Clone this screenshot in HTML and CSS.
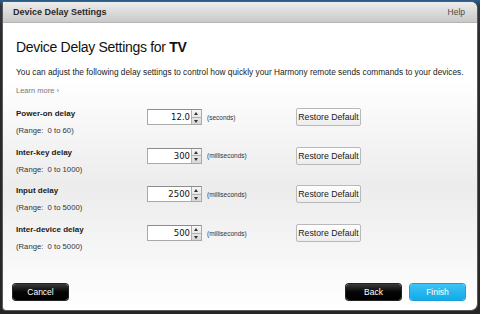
FILE: index.html
```html
<!DOCTYPE html>
<html lang="en">
  <head>
    <meta charset="UTF-8" />
    <title>Device Delay Settings</title>
    <link rel="stylesheet" href="styles.css">
  </head>
  <body>
    <div class="dialog">
      <div class="titlebar">
        <span class="titlebar__title">Device Delay Settings</span>
        <span class="titlebar__help">Help</span>
      </div>
      <div class="content">
        <h1>Device Delay Settings for <b>TV</b></h1>
        <p class="intro">You can adjust the following delay settings to control how quickly your Harmony remote sends commands to your devices.</p>
        <a class="learn">Learn more &rsaquo;</a>

        <div class="delays">
          <div class="delay">
            <div class="delay__label">
              <div class="delay__name">Power-on delay</div>
              <div class="delay__range">(Range:&nbsp; 0 to 60)</div>
            </div>
            <div class="delay__field">
              <div class="spin">
                <span class="spin__value">12.0</span>
                <span class="spin__arrows"><i class="up"></i><i class="down"></i></span>
              </div>
              <span class="delay__unit">(seconds)</span>
            </div>
            <button class="restore">Restore Default</button>
          </div>
          <div class="delay">
            <div class="delay__label">
              <div class="delay__name">Inter-key delay</div>
              <div class="delay__range">(Range:&nbsp; 0 to 1000)</div>
            </div>
            <div class="delay__field">
              <div class="spin">
                <span class="spin__value">300</span>
                <span class="spin__arrows"><i class="up"></i><i class="down"></i></span>
              </div>
              <span class="delay__unit">(milliseconds)</span>
            </div>
            <button class="restore">Restore Default</button>
          </div>
          <div class="delay">
            <div class="delay__label">
              <div class="delay__name">Input delay</div>
              <div class="delay__range">(Range:&nbsp; 0 to 5000)</div>
            </div>
            <div class="delay__field">
              <div class="spin">
                <span class="spin__value">2500</span>
                <span class="spin__arrows"><i class="up"></i><i class="down"></i></span>
              </div>
              <span class="delay__unit">(milliseconds)</span>
            </div>
            <button class="restore">Restore Default</button>
          </div>
          <div class="delay">
            <div class="delay__label">
              <div class="delay__name">Inter-device delay</div>
              <div class="delay__range">(Range:&nbsp; 0 to 5000)</div>
            </div>
            <div class="delay__field">
              <div class="spin">
                <span class="spin__value">500</span>
                <span class="spin__arrows"><i class="up"></i><i class="down"></i></span>
              </div>
              <span class="delay__unit">(milliseconds)</span>
            </div>
            <button class="restore">Restore Default</button>
          </div>
        </div>
      </div>
      <div class="footer">
        <button class="btn btn--dark">Cancel</button>
        <div class="footer__right">
          <button class="btn btn--dark">Back</button>
          <button class="btn btn--blue">Finish</button>
        </div>
      </div>
    </div>
  </body>
</html>
```

FILE: styles.css
```css
* {
  margin: 0;
  padding: 0;
  box-sizing: border-box;
}

body {
  width: 480px;
  height: 314px;
  overflow: hidden;
  font-family: "Liberation Sans", Arial, sans-serif;
  background: linear-gradient(to bottom, #2a5f8e 0, #2f3a45 6px, #2b2b2b 40px, #262626 100%);
  padding: 2px 3px 0 3px;
}

.dialog {
  height: 308px;
  display: flex;
  flex-direction: column;
  background: linear-gradient(to bottom, #ffffff 0, #ffffff 25%, #ececec 60%, #ffffff 100%);
  border-radius: 0 6px 6px 3px;
  overflow: hidden;
  box-shadow: 0 0 0 1px #5a5a5a;
}

.titlebar {
  height: 21px;
  display: flex;
  justify-content: space-between;
  align-items: center;
  padding: 0 12px 0 10px;
  background: linear-gradient(to bottom, #ececec, #c9c9c9);
  border-bottom: 1px solid #b4b4b4;
  font-size: 9px;
  color: #2a2a2a;
}

.titlebar__title {
  font-weight: bold;
}

.titlebar__help {
  font-size: 8.5px;
  color: #4a4a4a;
}

.content {
  padding: 0 13px;
  flex: 1;
}

h1 {
  font-size: 14px;
  font-weight: normal;
  letter-spacing: -0.3px;
  color: #111;
  margin-top: 14px;
  line-height: 20px;
}

h1 b {
  font-weight: bold;
}

.intro {
  font-size: 8.3px;
  color: #222;
  margin-top: 9px;
  line-height: 12px;
  white-space: nowrap;
}

.learn {
  display: block;
  font-size: 7.5px;
  color: #777;
  margin-top: 7px;
  line-height: 12px;
}

.delays {
  margin-top: 11px;
}

.delay {
  display: grid;
  grid-template-columns: 131px 149px auto;
  align-items: start;
  height: 38.7px;
}

.delay__name {
  font-size: 8px;
  font-weight: bold;
  color: #1a1a1a;
  line-height: 12px;
}

.delay__range {
  font-size: 7.7px;
  color: #333;
  margin-top: 5px;
  line-height: 12px;
}

.delay__field {
  display: flex;
  align-items: center;
  margin-top: 1px;
}

.spin {
  width: 55px;
  height: 16px;
  display: flex;
  align-items: stretch;
  background: #fff;
  border: 1px solid #a9a9a9;
  border-top-color: #8c8c8c;
}

.spin__value {
  flex: 1;
  text-align: right;
  font-family: "DejaVu Sans", sans-serif;
  font-size: 8.5px;
  line-height: 14px;
  color: #111;
  padding-right: 1px;
}

.spin__arrows {
  width: 10px;
  display: flex;
  flex-direction: column;
  border-left: 1px solid #b0b0b0;
  background: linear-gradient(to bottom, #f6f6f6, #d8d8d8);
}

.spin__arrows i {
  flex: 1;
  position: relative;
}

.spin__arrows .up {
  border-bottom: 1px solid #b0b0b0;
}

.spin__arrows i::after {
  content: "";
  position: absolute;
  left: 2px;
  top: 2px;
  border-left: 2.5px solid transparent;
  border-right: 2.5px solid transparent;
}

.spin__arrows .up::after {
  border-bottom: 3px solid #333;
}

.spin__arrows .down::after {
  border-top: 3px solid #333;
}

.delay__unit {
  font-size: 6.5px;
  color: #333;
  margin-left: 5px;
}

.restore {
  width: 65px;
  height: 18px;
  white-space: nowrap;
  font-family: "Liberation Sans", Arial, sans-serif;
  font-size: 8.7px;
  color: #1a1a1a;
  background: linear-gradient(to bottom, #ffffff, #ececec);
  border: 1px solid #b9b9b9;
  border-radius: 2px;
}

.footer {
  display: flex;
  justify-content: space-between;
  align-items: center;
  padding: 0 12px 10px 10px;
}

.footer__right {
  display: flex;
  gap: 9px;
}

.btn {
  width: 55px;
  height: 16px;
  border: none;
  border-radius: 3px;
  font-family: "Liberation Sans", Arial, sans-serif;
  font-size: 8.5px;
  color: #fff;
}

.btn--dark {
  background: linear-gradient(to bottom, #3a3a3a, #050505 50%, #000);
  box-shadow: 0 0 0 1px #222;
}

.btn--blue {
  background: linear-gradient(to bottom, #3cc3f5, #12aae8);
  box-shadow: 0 0 0 1px #1aa0d8;
}
```
